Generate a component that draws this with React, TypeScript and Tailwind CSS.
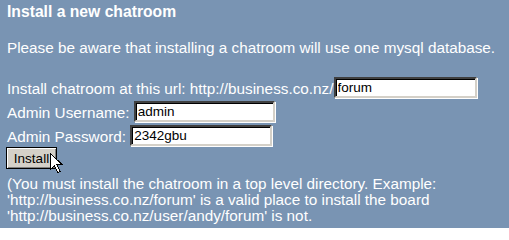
const inputCls =
  "h-[21px] bg-white text-black text-[13.5px] leading-[15px] px-[2px] py-0 border-2 border-t-[#404040] border-l-[#404040] border-b-[#d4d0c8] border-r-[#d4d0c8] outline-none font-['Liberation_Sans',Arial,sans-serif] shadow-[inset_1px_1px_0_#000,1px_1px_0_#fff]";

const Cursor = () => (
  <svg
    width="13"
    height="21"
    viewBox="0 0 13 21"
    className="absolute left-[44px] top-[6px]"
  >
    <path
      d="M0.5 0.5 L0.5 16.5 L4.5 12.5 L7.5 19.5 L10 18.5 L7 11.5 L12 11.5 Z"
      fill="#fff"
      stroke="#000"
      strokeWidth="1"
      shapeRendering="crispEdges"
    />
  </svg>
);

export default function App() {
  return (
    <div className="w-[509px] h-[228px] overflow-hidden bg-[#7994b3] text-white px-[7px] pt-[2px] font-['Liberation_Sans',Arial,sans-serif]">
      <h3 className="text-[15.7px] font-bold leading-[20px]">Install a new chatroom</h3>
      <p className="mt-[17px] text-[15.3px] leading-[17px]">
        Please be aware that installing a chatroom will use one mysql database.
      </p>

      <div className="mt-[19px] text-[15.3px] leading-[17px]">
        <div className="flex items-center h-[24px]">
          <span className="pt-[3px]">Install chatroom at this url: http://business.co.nz/</span>
          <input className={`${inputCls} w-[143px]`} defaultValue="forum" />
        </div>
        <div className="flex items-center h-[24px]">
          <span className="pt-[3px]">Admin Username:&nbsp;</span>
          <input className={`${inputCls} w-[141px]`} defaultValue="admin" />
        </div>
        <div className="flex items-center h-[24px]">
          <span className="pt-[3px]">Admin Password:&nbsp;</span>
          <input className={`${inputCls} w-[142px]`} defaultValue="2342gbu" />
        </div>
        <div className="relative h-[22px] -ml-[1px]">
          <button className="h-[22px] w-[51px] bg-[#d4d0c8] text-black text-[13.5px] leading-[15px] border border-black shadow-[inset_1px_1px_0_#fff,inset_-1px_-1px_0_#808080] font-['Liberation_Sans',Arial,sans-serif]">
            Install
          </button>
          <Cursor />
        </div>
        <p className="mt-[7px] leading-[16px]">
          (You must install the chatroom in a top level directory. Example:
          <br />
          'http://business.co.nz/forum' is a valid place to install the board
          <br />
          'http://business.co.nz/user/andy/forum' is not.
        </p>
      </div>
    </div>
  );
}
